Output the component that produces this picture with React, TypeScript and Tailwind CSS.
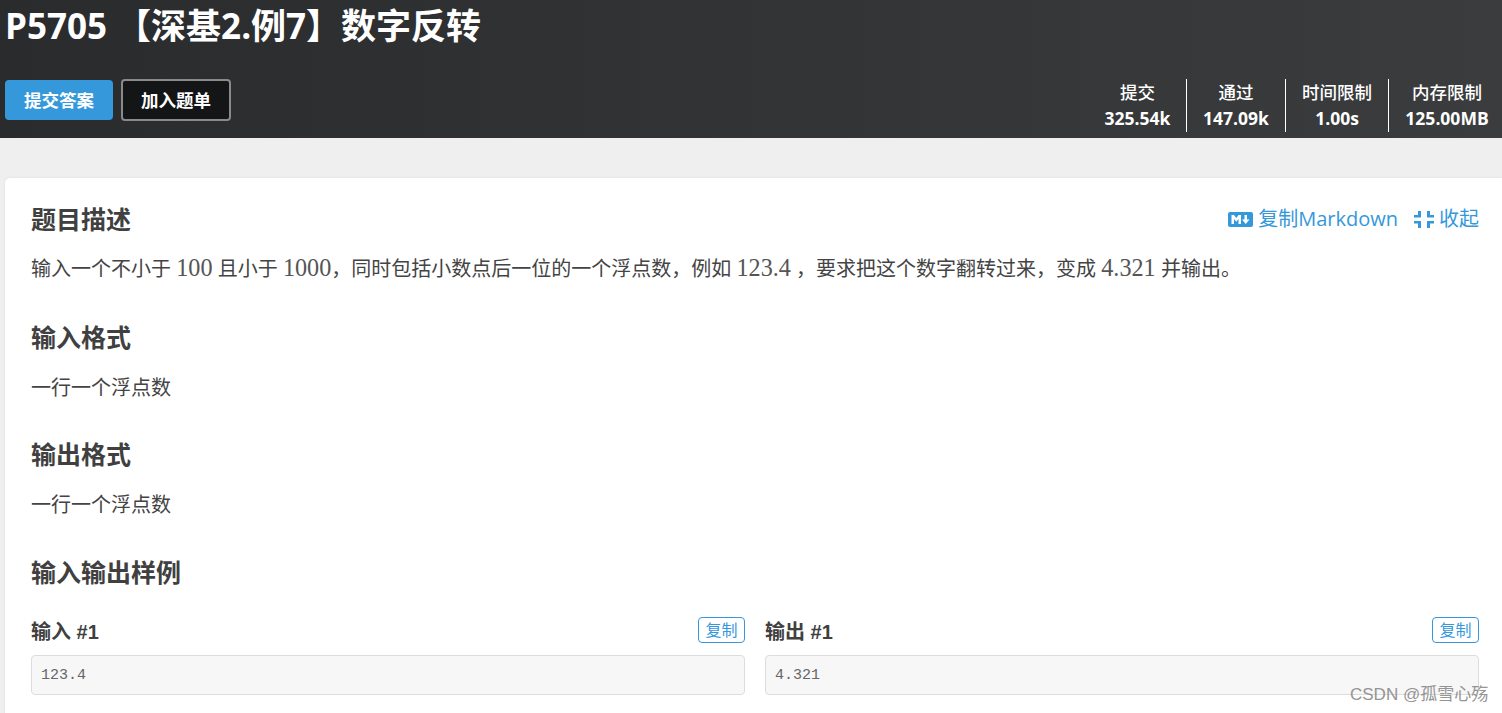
const sans = "font-['Open_Sans','Noto_Sans_CJK_SC',sans-serif]";

function Stat({ label, value, width, last }: { label: string; value: string; width: string; last?: boolean }) {
  return (
    <div className={`flex flex-col items-center justify-center h-[53px] ${width} ${last ? "" : "border-r border-white"}`}>
      <div className="text-[17.5px] leading-[26px] font-medium">{label}</div>
      <div className="text-[17.5px] leading-[27px] font-bold">{value}</div>
    </div>
  );
}

function Section({ title, text, className }: { title: string; text?: string; className?: string }) {
  return (
    <div className={className}>
      <h2 className="text-[25px] leading-[36px] font-bold text-[#404040]">{title}</h2>
      {text && <p className="mt-[17px] text-[20px] leading-[32px] text-[#444]">{text}</p>}
    </div>
  );
}

function Num({ children }: { children: string }) {
  return <span className="font-['Liberation_Serif',serif] text-[24.2px] text-[#555]">{children}</span>;
}

function Sample({ title, value }: { title: string; value: string }) {
  return (
    <div className="flex-1 min-w-0">
      <div className="flex items-center justify-between h-[34px]">
        <span className="text-[20px] font-bold text-[#404040] mt-[5px] font-['Liberation_Sans','Noto_Sans_CJK_SC',sans-serif]">{title}</span>
        <button className="w-[47px] h-[26px] mt-[2px] border border-[#3498db] rounded-[4px] text-[#3498db] text-[16px] leading-[22px] bg-white">复制</button>
      </div>
      <div className="mt-[9px] h-[40px] border border-[#ddd] rounded-[4px] bg-[#f7f7f7] px-[9px] pt-[3px] flex items-center font-['Liberation_Mono','Noto_Sans_CJK_SC',monospace] text-[15px] text-[#666]">
        {value}
      </div>
    </div>
  );
}

export default function App() {
  return (
    <div className={`relative w-[1502px] h-[713px] overflow-hidden bg-[#efefef] ${sans}`}>
      <header className="h-[138px] bg-gradient-to-r from-[#2a2b2d] to-[#3b3c3e] text-white">
        <h1 className="pl-[5px] h-[79px] text-[35px] leading-[52px] font-bold whitespace-nowrap">P5705 【深基2.例7】数字反转</h1>
        <div className="flex justify-between items-start">
          <div className="flex items-center gap-[8px] pl-[5px]">
            <button className="w-[108px] h-[40px] rounded-[4px] bg-[#3498db] text-[17.5px] font-semibold">提交答案</button>
            <button className="w-[110px] h-[42px] rounded-[4px] bg-[#141516] border-2 border-[#8a8a8a] text-[17.5px] font-semibold">加入题单</button>
          </div>
          <div className="flex">
            <Stat label="提交" value="325.54k" width="w-[98px]" />
            <Stat label="通过" value="147.09k" width="w-[99px]" />
            <Stat label="时间限制" value="1.00s" width="w-[103px]" />
            <Stat label="内存限制" value="125.00MB" width="w-[113px] pl-[3px]" last />
          </div>
        </div>
      </header>

      <main className="mt-[40px] ml-[5px] bg-white rounded-l-[5px] pl-[26px] pr-[23px] pt-[23px] h-[600px] shadow-[0_0_3px_rgba(0,0,0,0.08)]">
        <div className="flex justify-between items-start h-[36px]">
          <h2 className="text-[25px] leading-[36px] font-bold text-[#404040]">题目描述</h2>
          <div className="flex items-center text-[20px] leading-[34px] mt-[1px] text-[#3498db]">
            <svg width="25" height="15" viewBox="0 0 25 15" className="mr-[5px]">
              <rect width="25" height="15" rx="2" fill="#3498db" />
              <path d="M3.500 12V3h2.500l2.250 3 2.250-3H13v9h-2.500V7L8.250 9.800 6 7v5z" fill="#fff" />
              <path d="M16.500 3h2.500v4.500h2.500l-3.750 4.500L14 7.500h2.500z" fill="#fff" />
            </svg>
            <span>复制Markdown</span>
            <svg width="20" height="17" viewBox="0 0 20 17" className="ml-[16px] mr-[5px]" fill="#3498db">
              <path d="M4 0h3v6.500H0V4h4z" />
              <path d="M0 10h7v7H4v-4.500H0z" />
              <path d="M13 0h3v4h4v2.500h-7z" />
              <path d="M13 10h7v2.500h-4V17h-3z" />
            </svg>
            <span>收起</span>
          </div>
        </div>
        <p className="mt-[15px] text-[20px] leading-[32px] text-[#444] whitespace-nowrap">
          输入一个不小于 <Num>100</Num> 且小于 <Num>1000</Num>，同时包括小数点后一位的一个浮点数，例如 <Num>123.4</Num> ，要求把这个数字翻转过来，变成 <Num>4.321</Num> 并输出。
        </p>
        <Section className="mt-[34px]" title="输入格式" text="一行一个浮点数" />
        <Section className="mt-[32px]" title="输出格式" text="一行一个浮点数" />
        <Section className="mt-[33px]" title="输入输出样例" />
        <div className="mt-[22px] flex gap-[20px]">
          <Sample title="输入 #1" value="123.4" />
          <Sample title="输出 #1" value="4.321" />
        </div>
      </main>

      <div className="absolute left-[1350px] top-[683px] text-[17px] leading-[24px] text-[#8a8a8a] opacity-90 font-['Liberation_Sans','Noto_Sans_CJK_SC',sans-serif] whitespace-nowrap">
        CSDN @孤雪心殇
      </div>
    </div>
  );
}
